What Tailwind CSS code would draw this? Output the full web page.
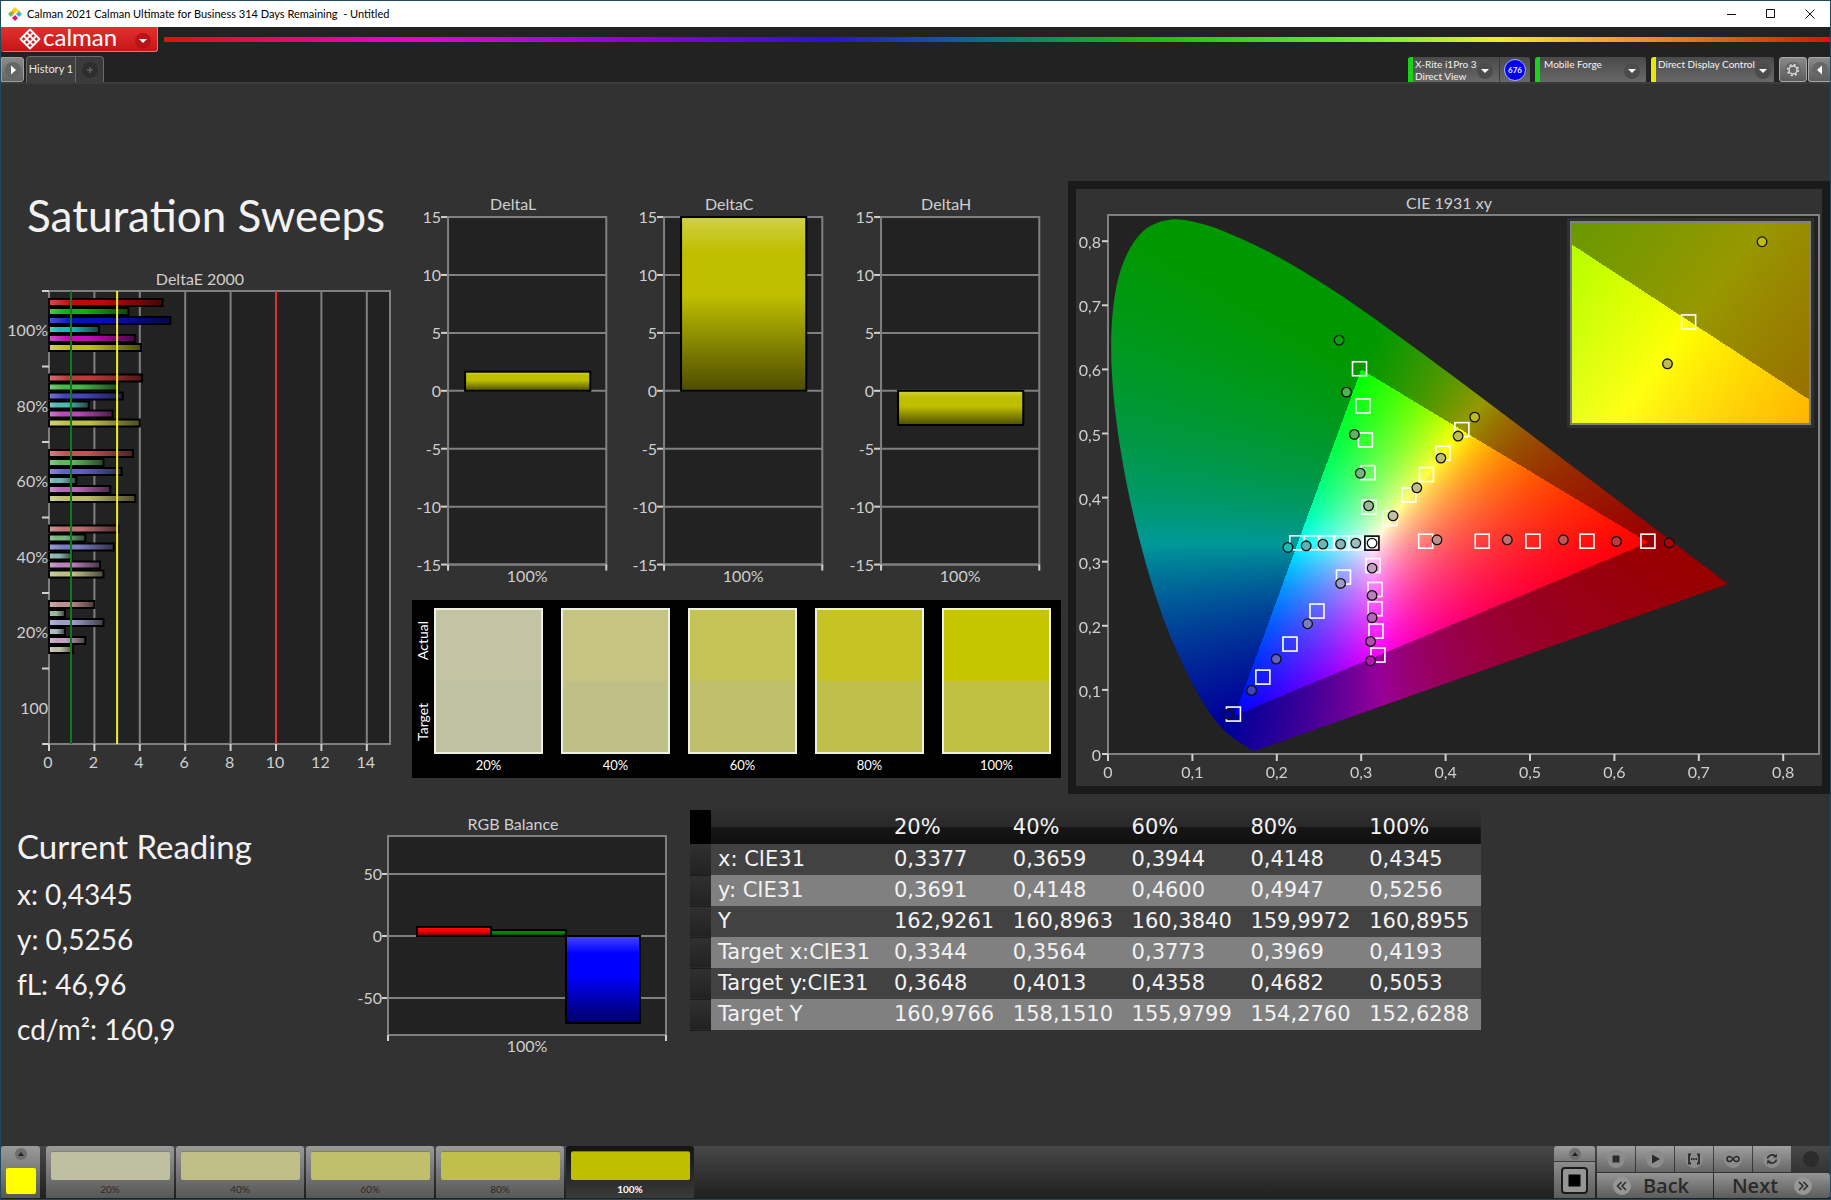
<!DOCTYPE html>
<html lang="en">
<head>
  <meta charset="UTF-8" />
  <meta name="viewport" content="width=device-width, initial-scale=1.0" />
  <title>Calman 2021 Calman Ultimate for Business 314 Days Remaining - Untitled</title>
  <script src="https://cdn.jsdelivr.net/npm/@tailwindcss/browser@4"></script>
</head>
<body class="bg-[#323232] font-['Lato','Liberation_Sans',sans-serif] text-[#f2f2f2]">
  <div class="flex min-h-screen flex-col border border-[#24485c]">

    <!-- Title bar -->
    <div class="flex h-[26px] items-center bg-white text-black">
      <svg class="ml-1.5 h-4 w-4" viewBox="0 0 16 16">
        <path d="M8 1l3 3-3 3-3-3z" fill="#f5d800"/>
        <path d="M4 5l3 3-3 3-3-3z" fill="#5ec64a"/>
        <path d="M12 5l3 3-3 3-3-3z" fill="#25b8d8"/>
        <path d="M8 9l3 3-3 3-3-3z" fill="#d8187c"/>
        <path d="M5 4l3 3-3 1zM11 4l2 2-3 2z" fill="#f59a20"/>
      </svg>
      <span class="ml-1 text-[11px] whitespace-pre">Calman 2021 Calman Ultimate for Business 314 Days Remaining  - Untitled</span>
      <div class="ml-auto flex">
        <button class="flex h-[26px] w-9 items-center justify-center" aria-label="Minimize">
          <svg class="h-3 w-3" viewBox="0 0 12 12" stroke="#111"><path d="M1 6.5h9"/></svg>
        </button>
        <button class="flex h-[26px] w-10 items-center justify-center" aria-label="Maximize">
          <svg class="h-3 w-3" viewBox="0 0 12 12" fill="none" stroke="#111"><path d="M2.500 1.500h8v8h-8z"/></svg>
        </button>
        <button class="flex h-[26px] w-10 items-center justify-center" aria-label="Close">
          <svg class="h-3 w-3" viewBox="0 0 12 12" stroke="#111"><path d="M1.500 1.500l9 9M10.500 1.500l-9 9"/></svg>
        </button>
      </div>
    </div>

    <!-- Header -->
    <header class="bg-[#222222]">
      <div class="flex items-start">
        <button class="flex h-[25px] w-[157px] items-center rounded-b-[3px] border-r border-b border-[#e87070] bg-linear-to-b from-[#e23030] to-[#c81414] pl-[18px] text-white" aria-label="Calman menu">
          <svg class="h-[22px] w-[22px]" viewBox="0 0 22 22" fill="none" stroke="#fff" stroke-width="1.800">
            <path d="M11 1.500l9.500 9.500-9.500 9.500L1.500 11z" stroke-linejoin="round"/>
            <path d="M7.800 4.700l9.500 9.500M4.700 7.800l9.500 9.500M14.200 4.700l-9.500 9.500M17.300 7.800l-9.500 9.500"/>
          </svg>
          <span class="ml-0.5 pb-1 text-[24px] leading-[20px]">calman</span>
          <svg class="mt-1 mr-1.5 ml-auto h-4 w-4" viewBox="0 0 16 16"><circle cx="8" cy="8" r="8" fill="#b81414"/><path d="M4 6h8l-4 4z" fill="#fff"/></svg>
        </button>
        <div class="mt-2.5 ml-1.5 h-[5px] flex-1 bg-[linear-gradient(to_right,#e60f0f_0%,#f000c8_15%,#a800e8_24%,#2a10e0_40%,#0a9a50_54%,#10c810_60%,#90f020_74%,#f0f020_80%,#e88820_90%,#e01010_100%)]"></div>
      </div>

      <div class="flex items-end pt-1">
        <button class="flex h-[25px] w-[23px] items-center justify-center rounded-r-[3px] border border-[#a0a0a0] bg-linear-to-b from-[#8a8a8a] to-[#646464]" aria-label="Open panel">
          <svg class="h-4 w-4" viewBox="0 0 16 16"><circle cx="8" cy="8" r="8" fill="#666"/><path d="M6 3.500l5 4.500-5 4.500z" fill="#fff"/></svg>
        </button>
        <button class="ml-0.5 flex h-[26px] w-[50px] items-center justify-center rounded-tl-[4px] border border-b-0 border-[#6a6a6a] bg-[#3e3e3e] text-[11px] whitespace-nowrap text-[#e6e6e6]">History 1</button>
        <button class="flex h-[26px] w-7 items-center justify-center rounded-tr-[4px] border-t border-r border-[#6a6a6a] bg-[#3a3a3a]" aria-label="Add tab">
          <svg class="h-4 w-4" viewBox="0 0 16 16"><circle cx="8" cy="8" r="8" fill="#2e2e2e"/><path d="M8 5v6M5 8h6" stroke="#777"/></svg>
        </button>

        <div class="ml-auto flex items-start gap-[5px] text-[10px] leading-3">
          <div class="flex h-[25px] rounded-t-[3px] bg-linear-to-b from-[#4a4a4a] to-[#686868]">
            <button class="flex w-[91px] items-start rounded-tl-[3px] border-l-[5px] border-[#18d418] text-left">
              <span class="w-[62px] pt-px pl-0.5 whitespace-nowrap">X-Rite i1Pro 3<br>Direct View</span>
              <svg class="mt-1.5 ml-0.5 h-4 w-4" viewBox="0 0 16 16"><circle cx="8" cy="8" r="8" fill="#4c4c4c"/><path d="M4 6h8l-4 4z" fill="#fff"/></svg>
            </button>
            <span class="flex w-[31px] items-center justify-center border-l border-[#3a3a3a]">
              <span class="flex h-[22px] w-[22px] items-center justify-center rounded-full border border-[#aab0ff] bg-[#0000f0] text-[8px] font-bold">676</span>
            </span>
          </div>
          <button class="flex h-[25px] w-[111px] items-start rounded-t-[3px] border-l-[5px] border-[#18d418] bg-linear-to-b from-[#4a4a4a] to-[#686868] text-left">
            <span class="pt-px pl-1 whitespace-nowrap">Mobile Forge</span>
            <svg class="mt-1.5 mr-1.5 ml-auto h-4 w-4" viewBox="0 0 16 16"><circle cx="8" cy="8" r="8" fill="#4c4c4c"/><path d="M4 6h8l-4 4z" fill="#fff"/></svg>
          </button>
          <button class="flex h-[25px] w-[123px] items-start rounded-t-[3px] border-l-[5px] border-[#e8e810] bg-linear-to-b from-[#4a4a4a] to-[#686868] text-left">
            <span class="pt-px pl-0.5 whitespace-nowrap">Direct Display Control</span>
            <svg class="mt-1.5 mr-1 ml-auto h-4 w-4 shrink-0" viewBox="0 0 16 16"><circle cx="8" cy="8" r="8" fill="#4c4c4c"/><path d="M4 6h8l-4 4z" fill="#fff"/></svg>
          </button>
          <div class="flex gap-px">
            <button class="flex h-[25px] w-7 items-center justify-center rounded-[3px] border border-[#a8a8a8] bg-linear-to-b from-[#8a8a8a] to-[#5c5c5c]" aria-label="Settings">
              <svg class="h-4 w-4" viewBox="0 0 16 16" fill="none"><circle cx="8" cy="8" r="8" fill="#666"/><circle cx="8" cy="8" r="4" stroke="#d8d8d8" stroke-width="1.500"/><circle cx="8" cy="8" r="5.400" stroke="#d8d8d8" stroke-width="1.600" stroke-dasharray="2.100 2.140"/></svg>
            </button>
            <button class="flex h-[25px] w-[22px] items-center justify-center rounded-l-[3px] border border-r-0 border-[#a8a8a8] bg-linear-to-b from-[#8a8a8a] to-[#5c5c5c]" aria-label="Collapse panel">
              <svg class="h-4 w-4" viewBox="0 0 16 16"><circle cx="8" cy="8" r="8" fill="#666"/><path d="M10 3.500L5 8l5 4.500z" fill="#fff"/></svg>
            </button>
          </div>
        </div>
      </div>
    </header>

    <main class="flex-1 border-t-2 border-[#3c3c3c] pt-[97px]">
      <div class="grid grid-cols-[411fr_656fr_762fr]">
        <!-- DeltaE sweep -->
        <section>
          <h1 class="mt-1.5 pl-[26px] text-[44px] leading-[56px] whitespace-nowrap">Saturation Sweeps</h1>
          <svg id="deltaE" class="mt-[22px] w-full" viewBox="0 0 411 525"></svg>
        </section>

        <!-- Delta L / C / H and swatches -->
        <section class="pt-2 pr-[7px]">
          <div class="grid grid-cols-3">
            <svg id="deltaL" class="w-full" viewBox="0 0 216 410"></svg>
            <svg id="deltaC" class="w-full" viewBox="0 0 216 410"></svg>
            <svg id="deltaH" class="w-full" viewBox="0 0 216 410"></svg>
          </div>
          <div class="flex bg-black pt-2 pr-2.5 text-[13px] text-white">
            <div class="flex h-[146px] w-[22px] shrink-0 flex-col items-center text-[14px] leading-5">
              <span class="flex flex-1 rotate-180 items-center justify-center pt-2 [writing-mode:vertical-rl]">Actual</span>
              <span class="flex flex-1 rotate-180 items-center justify-center pb-2 [writing-mode:vertical-rl]">Target</span>
            </div>
            <div id="swatches" class="grid flex-1 grid-cols-5 gap-[18px]"></div>
          </div>
        </section>

        <!-- CIE diagram -->
        <section class="border-[8px] border-[#1a1a1a]">
          <svg id="cie" class="w-full" viewBox="0 0 746 597"></svg>
        </section>
      </div>

      <div class="grid grid-cols-[347fr_342fr_791fr_349fr]">
        <section class="pt-8 pl-4">
          <h2 class="text-[33px] leading-[40px] whitespace-nowrap">Current Reading</h2>
          <div class="mt-1.5 text-[28px] leading-[45px]">
            <p>x: 0,4345</p>
            <p>y: 0,5256</p>
            <p>fL: 46,96</p>
            <p>cd/m²: 160,9</p>
          </div>
        </section>
        <svg id="rgb" class="w-full" viewBox="0 0 342 270"></svg>
        <table class="mt-4 w-full table-fixed self-start text-left font-['DejaVu_Sans',sans-serif] text-[21px] leading-[31px]">
          <colgroup>
            <col class="w-[21px]"><col class="w-[176px]"><col><col><col><col><col>
          </colgroup>
          <thead>
            <tr class="h-[34px] bg-[linear-gradient(#303030_0%,#282828_50%,#161616_50%,#101010_100%)]">
              <th class="bg-black"></th><th></th>
              <th class="pl-[7px] font-normal">20%</th><th class="pl-[7px] font-normal">40%</th><th class="pl-[7px] font-normal">60%</th><th class="pl-[7px] font-normal">80%</th><th class="pl-[7px] font-normal">100%</th>
            </tr>
          </thead>
          <tbody id="rows"></tbody>
        </table>
      </div>
    </main>

    <!-- Bottom toolbar -->
    <footer class="flex h-[53px] bg-linear-to-b from-[#484848] to-[#202020] pb-px">
      <div class="flex w-[39px] flex-col items-center rounded-t-[3px] bg-linear-to-b from-[#9a9a9a] to-[#585858] pt-0.5">
        <svg class="h-3 w-3" viewBox="0 0 12 12"><circle cx="6" cy="6" r="6" fill="#6e6e6e"/><path d="M3 8h6L6 4z" fill="#222"/></svg>
        <span class="mt-2 h-[26px] w-[30px] rounded-[2px] bg-[#ffff00]"></span>
      </div>
      <div id="steps" class="ml-1.5 flex gap-0.5"></div>

      <div class="ml-auto flex gap-0.5">
        <div class="flex w-[41px] flex-col gap-px">
          <button class="flex h-[15px] items-center justify-center rounded-t-[3px] bg-linear-to-b from-[#9c9c9c] to-[#7a7a7a]" aria-label="Expand">
            <svg class="h-3 w-3" viewBox="0 0 12 12"><circle cx="6" cy="6" r="6" fill="#6e6e6e"/><path d="M3 8h6L6 4z" fill="#222"/></svg>
          </button>
          <button class="flex flex-1 items-center justify-center bg-linear-to-b from-[#8c8c8c] to-[#5c5c5c]" aria-label="Stop reading">
            <svg class="h-[27px] w-[27px]" viewBox="0 0 27 27"><rect x="1" y="1" width="25" height="25" rx="3" fill="#959595" stroke="#1a1a1a" stroke-width="2"/><path d="M7.500 7.500h12v12h-12z" fill="#000"/></svg>
          </button>
        </div>
        <div class="grid w-[233px] grid-cols-6 grid-rows-[26px_25px] gap-px">
          <button class="flex items-center justify-center bg-linear-to-b from-[#a0a0a0] to-[#666666]" aria-label="Stop">
            <svg class="h-[18px] w-[18px]" viewBox="0 0 18 18"><circle cx="9" cy="9" r="9" fill="#8c8c8c"/><path d="M5.500 5.500h7v7h-7z" fill="#2a2a2a"/></svg>
          </button>
          <button class="flex items-center justify-center bg-linear-to-b from-[#a0a0a0] to-[#666666]" aria-label="Play">
            <svg class="h-[18px] w-[18px]" viewBox="0 0 18 18"><circle cx="9" cy="9" r="9" fill="#8c8c8c"/><path d="M6 4.500l8 4.500-8 4.500z" fill="#2a2a2a"/></svg>
          </button>
          <button class="flex items-center justify-center bg-linear-to-b from-[#a0a0a0] to-[#666666]" aria-label="Read series">
            <svg class="h-[18px] w-[18px]" viewBox="0 0 18 18" fill="none" stroke="#2a2a2a" stroke-width="1.800"><circle cx="9" cy="9" r="9" fill="#8c8c8c" stroke="none"/><path d="M6 4.500H4v9h2M12 4.500h2v9h-2M6 9h1.500M8.300 9h1.400M10.500 9H12"/></svg>
          </button>
          <button class="flex items-center justify-center bg-linear-to-b from-[#a0a0a0] to-[#666666]" aria-label="Read continuously">
            <svg class="h-[18px] w-[18px]" viewBox="0 0 18 18" fill="none" stroke="#2a2a2a" stroke-width="1.500"><circle cx="9" cy="9" r="9" fill="#8c8c8c" stroke="none"/><path d="M9 9C7.500 7 6.500 6.500 5.500 6.500a2.500 2.500 0 000 5C6.500 11.500 7.500 11 9 9s2.500-2.500 3.500-2.500a2.500 2.500 0 010 5C11.500 11.500 10.500 11 9 9z"/></svg>
          </button>
          <button class="flex items-center justify-center bg-linear-to-b from-[#a0a0a0] to-[#666666]" aria-label="Refresh">
            <svg class="h-[18px] w-[18px]" viewBox="0 0 18 18" fill="none" stroke="#2a2a2a" stroke-width="1.700"><circle cx="9" cy="9" r="9" fill="#8c8c8c" stroke="none"/><path d="M4.500 8.500a4.500 4 0 017.500-2.500M13.500 9.500A4.500 4 0 016 12"/><path d="M13.800 3.800v3.700h-3.700zM4.200 14.200v-3.700h3.700z" fill="#2a2a2a" stroke="none"/></svg>
          </button>
          <span class="flex items-center justify-center"><span class="h-4 w-4 rounded-full bg-[#2c2c2c]"></span></span>
          <button class="col-span-3 flex items-center justify-center gap-3 bg-linear-to-b from-[#959595] to-[#5c5c5c] pr-2 font-['Open_Sans',sans-serif] text-[20px] leading-6 font-semibold text-[#2a2a2a]">
            <svg class="h-[18px] w-[18px]" viewBox="0 0 18 18" fill="none" stroke="#2a2a2a" stroke-width="1.500"><circle cx="9" cy="9" r="9" fill="#969696" stroke="none"/><path d="M8.500 5l-4 4 4 4M13 5L9 9l4 4"/></svg>
            Back
          </button>
          <button class="col-span-3 flex items-center justify-center gap-4 rounded-r-[3px] bg-linear-to-b from-[#959595] to-[#5c5c5c] font-['Open_Sans',sans-serif] text-[20px] leading-6 font-semibold text-[#2a2a2a]">
            Next
            <svg class="h-[18px] w-[18px]" viewBox="0 0 18 18" fill="none" stroke="#2a2a2a" stroke-width="1.500"><circle cx="9" cy="9" r="9" fill="#969696" stroke="none"/><path d="M5 5l4 4-4 4M9.500 5l4 4-4 4"/></svg>
          </button>
        </div>
      </div>
    </footer>
  </div>

  <script>
    const levels = ["20%", "40%", "60%", "80%", "100%"];
    const GRID = "#808080";
    const TEXT = "#cfcfcf";

    const line = (x1, y1, x2, y2, color = GRID, w = 2) =>
      `<line x1="${x1}" y1="${y1}" x2="${x2}" y2="${y2}" stroke="${color}" stroke-width="${w}"/>`;
    const label = (x, y, text, anchor = "middle") =>
      `<text x="${x}" y="${y}" text-anchor="${anchor}" font-size="16" fill="${TEXT}">${text}</text>`;
    const frame = (x, y, w, h) =>
      `<rect x="${x}" y="${y}" width="${w}" height="${h}" fill="none" stroke="${GRID}" stroke-width="2"/>`;

    // glossy overlay, x2/y2 select the direction
    const gloss = (id, x2, y2) => `
      <defs><linearGradient id="${id}" x1="0" y1="0" x2="${x2}" y2="${y2}">
        <stop offset="0" stop-color="#fff" stop-opacity=".28"/>
        <stop offset=".2" stop-color="#fff" stop-opacity="0"/>
        <stop offset=".45" stop-color="#000" stop-opacity="0"/>
        <stop offset="1" stop-color="#000" stop-opacity=".6"/>
      </linearGradient></defs>`;
    const bar = (x, y, w, h, color, id) => `
      <rect x="${x}" y="${y}" width="${w}" height="${h}" fill="${color}"/>
      <rect x="${x}" y="${y}" width="${w}" height="${h}" fill="url(#${id})" stroke="#000" stroke-width="2"/>`;

    // ---- DeltaE 2000 ----
    const deltaE = [
      { name: "100%", v: [5.0, 3.5, 5.35, 2.2, 3.8, 4.05], c: ["#bf0a0a", "#0cb40c", "#0c0cb8", "#14bcb4", "#bb10b6", "#bebe14"] },
      { name: "80%", v: [4.1, 3.05, 3.25, 1.75, 2.8, 4.0], c: ["#bf3a3a", "#48b648", "#4444b8", "#50b8b2", "#b84ab8", "#bebe50"] },
      { name: "60%", v: [3.7, 2.4, 3.2, 1.2, 2.7, 3.8], c: ["#bf5454", "#60b460", "#6262bc", "#6ab6b2", "#b864b8", "#bebc6c"] },
      { name: "40%", v: [3.05, 1.6, 2.85, 1.0, 2.25, 2.4], c: ["#c07070", "#78b47e", "#7c7cc0", "#8ab6b6", "#bc80bc", "#bebc88"] },
      { name: "20%", v: [2.0, 0.7, 2.4, 0.7, 1.6, 1.05], c: ["#bf9090", "#98b898", "#9c9cc4", "#a6bcc0", "#c0a2c0", "#c0c0a8"] },
    ];

    function drawDeltaE() {
      const L = 48, T = 26, W = 341, H = 453, u = 22.7, p = H / 6;
      let s = gloss("gE", 1, 0) + label(199, 20, "DeltaE 2000");
      s += `<rect x="${L}" y="${T}" width="${W}" height="${H}" fill="#222"/>`;
      for (let v = 2; v <= 14; v += 2) s += line(L + v * u, T, L + v * u, T + H);
      s += frame(L, T, W, H);
      for (let v = 0; v <= 14; v += 2) {
        s += line(L + v * u, T + H, L + v * u, T + H + 7, "#d0d0d0") + label(L + v * u - 1, T + H + 24, v);
      }
      for (let i = 0; i <= 6; i++) s += line(L - 7, T + i * p, L, T + i * p, "#d0d0d0");
      deltaE.forEach((g, i) => {
        s += label(L - 1, T + i * p + 45, g.name, "end");
        g.v.forEach((v, k) => s += bar(L, T + 8 + i * p + k * 9, v * u, 7, g.c[k], "gE"));
      });
      s += label(L - 1, T + 5 * p + 45, "100", "end");
      s += line(L + 22, T, L + 22, T + H, "#0c7a18") + line(L + 3 * u, T, L + 3 * u, T + H, "#f0f020") + line(L + 10 * u, T, L + 10 * u, T + H, "#e03030");
      document.getElementById("deltaE").innerHTML = s;
    }

    // ---- DeltaL, DeltaC, DeltaH ----
    function drawDelta(id, name, value) {
      const L = 36, T = 28, W = 158, H = 347, zero = T + H / 2, u = H / 30;
      let s = gloss("g" + id, 0, 1) + label(101, 21, name);
      s += `<rect x="${L}" y="${T}" width="${W}" height="${H}" fill="#222"/>`;
      for (let v = -15; v <= 15; v += 5) {
        const y = zero - v * u;
        s += line(L, y, L + W, y) + line(L - 7, y, L, y, "#d0d0d0") + label(L - 7, y + 6, v, "end");
      }
      s += frame(L, T, W, H) + line(L, T + H, L, T + H + 6, "#d0d0d0") + line(L + W, T + H, L + W, T + H + 6, "#d0d0d0");
      s += label(115, T + H + 17, "100%");
      const h = Math.abs(value) * u;
      s += bar(L + 17, value > 0 ? zero - h : zero, 125, h, "#bfbf00", "g" + id);
      document.getElementById(id).innerHTML = s;
    }

    // ---- RGB balance ----
    function drawRgb() {
      const L = 40, T = 42, W = 278, H = 199, zero = 142, u = 1.24;
      let s = gloss("gRgb", 0, 1) + label(165, 36, "RGB Balance");
      s += `<rect x="${L}" y="${T}" width="${W}" height="${H}" fill="#222"/>`;
      [50, 0, -50].forEach(v => {
        const y = zero - v * u;
        s += line(L, y, L + W, y) + line(L - 6, y, L, y, "#d0d0d0") + label(L - 6, y + 6, v, "end");
      });
      s += frame(L, T, W, H) + line(L, T + H, L, T + H + 6, "#d0d0d0") + line(L + W, T + H, L + W, T + H + 6, "#d0d0d0");
      s += bar(69, zero - 9, 74, 9, "#f00", "gRgb") + bar(143, zero - 6, 75, 6, "#0a820a", "gRgb") + bar(218, zero, 74, 87, "#00f", "gRgb");
      s += label(179, T + H + 17, "100%");
      document.getElementById("rgb").innerHTML = s;
    }

    // ---- CIE 1931 ----
    const locus = [
      [.1741, .005], [.1689, .0069], [.1644, .0109], [.1566, .0177], [.151, .0227], [.144, .0297],
      [.1355, .0399], [.1241, .0578], [.1096, .0868], [.0913, .1327], [.0687, .2007], [.0454, .295], [.0235, .4127], [.0082, .5384],
      [.0039, .6548], [.0139, .7502], [.0389, .812], [.0743, .8338], [.1142, .8262], [.1547, .8059], [.1929, .7816], [.2296, .7543],
      [.2658, .7243], [.3016, .6923], [.3373, .6589], [.3731, .6245], [.4087, .5896], [.4441, .5547], [.4788, .5202], [.5125, .4866],
      [.5448, .4544], [.5752, .4242], [.6029, .3965], [.627, .3725], [.6482, .3514], [.6658, .334], [.6915, .3083], [.7079, .292],
      [.719, .2809], [.7347, .2653],
    ];
    const targets = [
      [.298, .601], [.302, .543], [.305, .49], [.308, .439], [.309, .385],
      [.4193, .506], [.3969, .469], [.3773, .436], [.3564, .404], [.3344, .3675],
      [.2237, .3295], [.241, .3295], [.259, .3295], [.2767, .3295], [.2936, .3295],
      [.3764, .332], [.4434, .332], [.5034, .332], [.5675, .332], [.6397, .332],
      [.279, .276], [.2476, .223], [.2156, .1715], [.1835, .12], [.1486, .0623],
      [.314, .294], [.3163, .2567], [.3163, .2266], [.3175, .1918], [.3198, .1543],
    ];
    const readings = [
      [.2738, .6456, "#0ca00c"], [.2826, .5645, "#48b648"], [.2919, .4985, "#60b460"], [.2989, .438, "#78b47e"], [.3088, .3872, "#98b898"],
      [.4345, .5256, "#bebe14"], [.4148, .496, "#bebe50"], [.3944, .4616, "#bebc6c"], [.3659, .4153, "#bebc88"], [.3377, .3716, "#c0c0a8"],
      [.2132, .3222, "#14bcb4"], [.2348, .3248, "#50b8b2"], [.2546, .3274, "#6ab6b2"], [.2756, .3274, "#8ab6b6"], [.2936, .329, "#a6bcc0"],
      [.3898, .3342, "#bf9090"], [.4731, .3342, "#c07070"], [.5395, .3342, "#bf5454"], [.6024, .3316, "#bf3a3a"], [.6648, .3295, "#a80404"],
      [.2756, .2661, "#9c9cc4"], [.2365, .2032, "#7c7cc0"], [.1993, .1481, "#6262bc"], [.1701, .0992, "#4444b8"], [.1422, .0623, "#0000a0"],
      [.3129, .29, "#c0a2c0"], [.3129, .2474, "#bc80bc"], [.3129, .2126, "#b864b8"], [.3111, .1756, "#b84ab8"], [.3111, .1455, "#bb10b6"],
    ];

    // linear RGB scaled to its largest channel, dimmed outside the gamut
    function chroma(x, y) {
      const X = x / y, Z = (1 - x - y) / y;
      const r = 3.2406 * X - 1.5372 - .4986 * Z;
      const g = -.9689 * X + 1.8758 + .0415 * Z;
      const b = .0557 * X - .204 + 1.057 * Z;
      const m = Math.max(r, g, b);
      const k = (Math.min(r, g, b) >= 0 ? 255 : 152) / m;
      return [Math.max(0, r) * k, Math.max(0, g) * k, Math.max(0, b) * k];
    }

    // fills a canvas with chromaticity colours between two xy corners
    function paint(canvas, x0, x1, y0, y1, clip) {
      const w = canvas.width, h = canvas.height;
      const off = document.createElement("canvas");
      off.width = w; off.height = h;
      const octx = off.getContext("2d");
      const img = octx.createImageData(w, h);
      for (let j = 0; j < h; j++) {
        for (let i = 0; i < w; i++) {
          const c = chroma(x0 + (i + .5) / w * (x1 - x0), y1 - (j + .5) / h * (y1 - y0));
          const o = (j * w + i) * 4;
          img.data[o] = c[0]; img.data[o + 1] = c[1]; img.data[o + 2] = c[2]; img.data[o + 3] = 255;
        }
      }
      octx.putImageData(img, 0, 0);
      const ctx = canvas.getContext("2d");
      if (clip) {
        // smooth curve through every locus point
        const p = locus.map(([x, y]) => [(x - x0) / (x1 - x0) * w, (y1 - y) / (y1 - y0) * h]);
        ctx.beginPath();
        ctx.moveTo(...p[0]);
        for (let i = 0; i < p.length - 1; i++) {
          const a = p[Math.max(0, i - 1)], b = p[i], c = p[i + 1], d = p[Math.min(p.length - 1, i + 2)];
          ctx.bezierCurveTo(b[0] + (c[0] - a[0]) / 6, b[1] + (c[1] - a[1]) / 6, c[0] - (d[0] - b[0]) / 6, c[1] - (d[1] - b[1]) / 6, c[0], c[1]);
        }
        ctx.closePath();
        ctx.clip();
      }
      ctx.drawImage(off, 0, 0);
    }

    const square = (x, y, color = "#fff") => `<rect x="${x - 7}" y="${y - 7}" width="14" height="14" fill="none" stroke="${color}" stroke-width="1.600"/>`;
    const dot = (x, y, fill) => `<circle cx="${x}" cy="${y}" r="4.800" fill="${fill}" stroke="#111" stroke-width="1.300"/>`;

    function drawCie() {
      const L = 32, T = 26, W = 711, H = 539, ux = 844, uy = 641;
      const px = x => L + x * ux, py = y => T + H - y * uy;
      let s = label(373, 20, "CIE 1931 xy");
      s += `<rect x="${L}" y="${T}" width="${W}" height="${H}" fill="#222"/>`;
      s += `<foreignObject x="${L}" y="${T}" width="${W}" height="${H}"><canvas id="cieMain" width="${W}" height="${H}"></canvas></foreignObject>`;
      s += frame(L, T, W, H);
      for (let i = 0; i <= 8; i++) {
        const t = i ? "0," + i : "0";
        s += line(px(i / 10), T + H, px(i / 10), T + H + 7, "#d0d0d0") + label(px(i / 10), T + H + 24, t);
        s += line(L - 6, py(i / 10), L, py(i / 10), "#d0d0d0") + label(L - 7, py(i / 10) + 7, t, "end");
      }
      targets.forEach(([x, y]) => s += square(px(x), py(y)));
      readings.forEach(([x, y, c]) => s += dot(px(x), py(y), c));
      s += square(px(.3127), py(.329), "#000") + dot(px(.3129), py(.329), "#fff");

      // magnified view of the current target
      const ix = 495, iy = 33, iw = 239, ih = 202;
      const mx = x => ix + (x - .3944) * 4800, my = y => iy + (.5306 - y) * 3950;
      s += `<rect x="${ix - 4}" y="${iy - 4}" width="${iw + 8}" height="${ih + 8}" fill="#303030"/>`;
      s += `<foreignObject x="${ix}" y="${iy}" width="${iw}" height="${ih}"><canvas id="cieZoom" width="${iw}" height="${ih}"></canvas></foreignObject>`;
      s += frame(ix, iy, iw, ih);
      s += square(mx(.4189), my(.5053)) + dot(mx(.4145), my(.4947), "#bebe50") + dot(mx(.4342), my(.5256), "#bebe14");
      document.getElementById("cie").innerHTML = s;
      paint(document.getElementById("cieMain"), 0, W / ux, 0, H / uy, true);
      paint(document.getElementById("cieZoom"), .3944, .3944 + iw / 4800, .5306 - ih / 3950, .5306, false);
    }

    // ---- Swatches, table, step buttons ----
    const actual = ["#c4c4a4", "#c5c481", "#c4c355", "#c6c425", "#c6c600"];
    const target = ["#c0c0a2", "#c0bf87", "#c0bf6c", "#bfbf4b", "#c0c043"];
    document.getElementById("swatches").innerHTML = levels.map((l, i) => `
      <div class="pb-0.5 text-center">
        <div class="flex h-[146px] flex-col border-2 border-[#f0f0e0]">
          <div class="flex-1" style="background:${actual[i]}"></div>
          <div class="flex-1" style="background:${target[i]}"></div>
        </div>
        <div class="leading-[22px]">${l}</div>
      </div>`).join("");

    const data = [
      ["x: CIE31", "0,3377", "0,3659", "0,3944", "0,4148", "0,4345"],
      ["y: CIE31", "0,3691", "0,4148", "0,4600", "0,4947", "0,5256"],
      ["Y", "162,9261", "160,8963", "160,3840", "159,9972", "160,8955"],
      ["Target x:CIE31", "0,3344", "0,3564", "0,3773", "0,3969", "0,4193"],
      ["Target y:CIE31", "0,3648", "0,4013", "0,4358", "0,4682", "0,5053"],
      ["Target Y", "160,9766", "158,1510", "155,9799", "154,2760", "152,6288"],
    ];
    document.getElementById("rows").innerHTML = data.map((r, i) => `
      <tr class="${i % 2 ? "bg-[#808080]" : "bg-[#424242]"}">
        <td class="border-b border-[#1c1c1c] bg-linear-to-b from-[#303030] to-[#222222]"></td>
        <th class="pl-[7px] font-normal whitespace-nowrap">${r[0]}</th>
        ${r.slice(1).map(v => `<td class="pl-[7px] whitespace-nowrap">${v}</td>`).join("")}
      </tr>`).join("");

    const steps = ["#bfc0a2", "#c0bf87", "#c0bf6c", "#bfbf4b", "#bfbf00"];
    document.getElementById("steps").innerHTML = levels.map((l, i) => `
      <button class="flex w-[128px] flex-col items-center rounded-t-[3px] pt-[5px] text-[10px] leading-[18px] ${i === 4 ? "bg-linear-to-b from-[#141414] to-[#3a3a3a] font-bold text-white" : "bg-linear-to-b from-[#9a9a9a] to-[#585858] text-[#2a2a2a]"}">
        <span class="h-[30px] w-[119px] rounded-[2px] border-t border-black/30" style="background:${steps[i]}"></span>
        ${l}
      </button>`).join("");

    drawDeltaE();
    drawDelta("deltaL", "DeltaL", 1.65);
    drawDelta("deltaC", "DeltaC", 15);
    drawDelta("deltaH", "DeltaH", -2.95);
    drawRgb();
    drawCie();
  </script>
</body>
</html>
